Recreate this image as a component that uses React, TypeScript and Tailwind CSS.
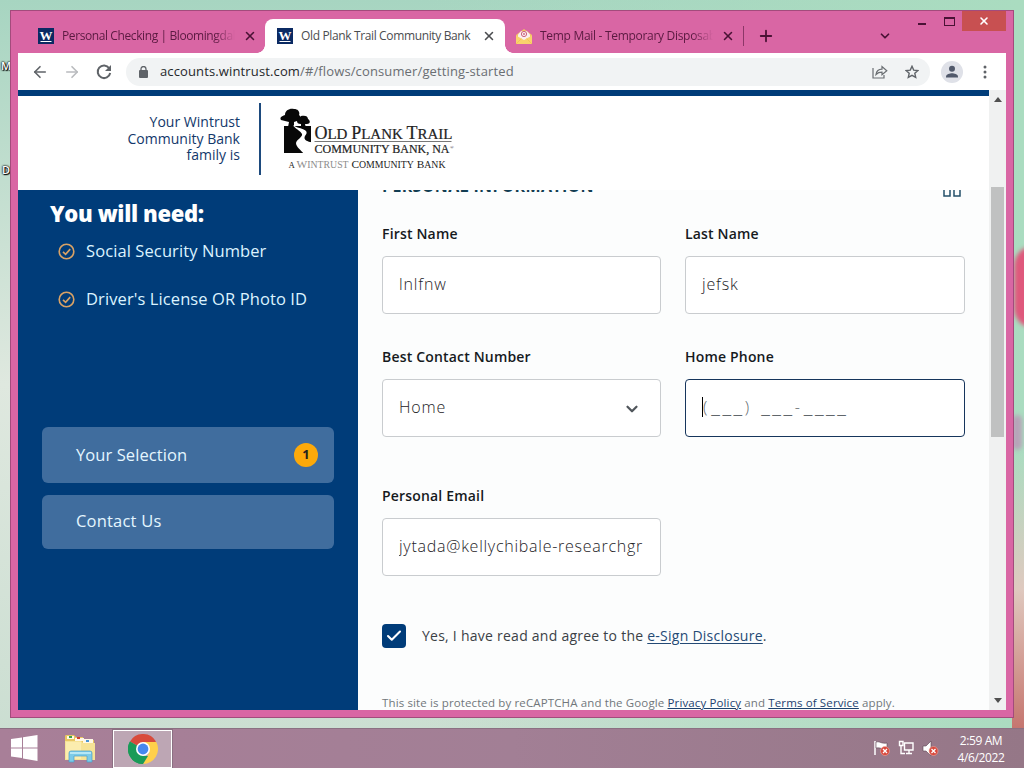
import { ArrowLeft, ArrowRight, ChevronDown, Check, Plus, X } from 'lucide-react';
import type { ReactNode } from 'react';

function WintrustFavicon() {
  return (
    <svg width="16" height="16" viewBox="0 0 16 16" className="shrink-0">
      <rect width="16" height="16" fill="#0b2a63" />
      <text x="8" y="11.5" textAnchor="middle" fontFamily="Liberation Serif, serif" fontWeight="700" fontSize="13" fill="#fff">W</text>
      <path d="M2.5 13.5h11" stroke="#fff" strokeWidth="1" />
    </svg>
  );
}

function MailFavicon() {
  return (
    <svg width="18" height="17" viewBox="0 0 18 17" className="shrink-0">
      <path d="M1 7 9 1l8 6v9H1z" fill="#f3c467" />
      <path d="M3 6.5 6 3.2h6L15 6.5v3L9 13 3 9.500z" fill="#fbeef0" />
      <circle cx="9" cy="6" r="2.600" fill="none" stroke="#c9607c" strokeWidth="1" />
      <circle cx="9" cy="6" r="0.900" fill="#c9607c" />
      <path d="M1 7.500 9 12l8-4.500V16H1z" fill="#f9d36c" />
      <path d="M1 16l5.500-5.500M17 16l-5.500-5.500" stroke="#f3bd52" strokeWidth="0.700" />
    </svg>
  );
}

function TabStrip() {
  return (
    <div className="flex h-[42px] shrink-0 items-end font-['Open_Sans','Noto_Sans',sans-serif] text-[12px] text-[#5b1a41]">
      <div className="flex h-[34px] w-[247px] items-center pl-5">
        <WintrustFavicon />
        <span className="ml-2 w-[173px] overflow-hidden whitespace-nowrap tracking-[-0.4px] [mask-image:linear-gradient(90deg,#000_88%,transparent)]">
          Personal Checking | Bloomingdale
        </span>
        <X className="ml-[8px] h-3.5 w-3.5 shrink-0 text-[#4a1235]" strokeWidth={2.600} />
      </div>
      <div className="relative flex h-[34px] w-[240px] items-center rounded-t-lg bg-white pl-3 text-[#4b4d50]">
        <div className="absolute bottom-0 -left-2 h-2 w-2 bg-[radial-gradient(circle_at_0_0,transparent_7.5px,white_8px)]" />
        <div className="absolute -right-2 bottom-0 h-2 w-2 bg-[radial-gradient(circle_at_100%_0,transparent_7.5px,white_8px)]" />
        <WintrustFavicon />
        <span className="ml-2 w-[172px] whitespace-nowrap tracking-[-0.36px]">Old Plank Trail Community Bank</span>
        <X className="ml-[9px] h-3.5 w-3.5 shrink-0" strokeWidth={2.600} />
      </div>
      <div className="flex h-[34px] w-[239px] items-center pl-[10px]">
        <MailFavicon />
        <span className="ml-[7px] w-[173px] overflow-hidden whitespace-nowrap tracking-[-0.3px] [mask-image:linear-gradient(90deg,#000_88%,transparent)]">
          Temp Mail - Temporary Disposable
        </span>
        <X className="ml-[8px] h-3.5 w-3.5 shrink-0 text-[#4a1235]" strokeWidth={2.600} />
        <span className="ml-[8px] h-5 w-px shrink-0 bg-[#8c3768]" />
      </div>
      <div className="flex h-[34px] flex-1 items-center">
        <Plus className="ml-[13px] h-[18px] w-[18px] text-[#4a1235]" strokeWidth={2.400} />
        <ChevronDown className="ml-[103px] h-3.5 w-3.5 text-[#4a1235]" strokeWidth={3} />
      </div>
      <div className="flex h-[42px] w-[100px] items-start text-[#4a1235]">
        <span className="mt-[12px] ml-[12px] h-[2px] w-[8px] bg-[#4a1235]" />
        <span className="mt-[6px] ml-[18px] h-[9px] w-[11px] border border-t-2 border-[#4a1235]" />
        <span className="ml-[7px] flex h-5 w-[44px] items-center justify-center bg-[#c85051] text-white">
          <X className="h-3 w-3" strokeWidth={3.200} />
        </span>
      </div>
    </div>
  );
}

function Toolbar() {
  return (
    <div className="flex h-[38px] shrink-0 items-center border-b border-[#e3ecee] bg-white pl-[13px] text-[#5f6368]">
      <ArrowLeft className="h-[18px] w-[18px]" strokeWidth={2.200} />
      <ArrowRight className="ml-[14px] h-[18px] w-[18px] text-[#b9bbbe]" strokeWidth={2.200} />
      <svg width="16" height="16" viewBox="0 0 16 16" fill="none" className="ml-[15px]">
        <path d="M13.200 4.200A6.300 6.300 0 1 0 14.200 9" stroke="#5f6368" strokeWidth="2" />
        <path d="M15 1v6H9z" fill="#5f6368" />
      </svg>
      <div className="ml-[14px] flex h-7 w-[804px] items-center rounded-full bg-[#f1f3f4] pl-[13px] font-['Open_Sans','Noto_Sans',sans-serif] text-[13px] tracking-[0.13px] text-[#6a6e72]">
        <svg width="9" height="12" viewBox="0 0 9 12">
          <rect y="4" width="9" height="8" rx="1" fill="#5f6368" />
          <path d="M2 5V3a2.500 2.500 0 0 1 5 0v2" fill="none" stroke="#5f6368" strokeWidth="1.300" />
        </svg>
        <span className="ml-[12px] flex-1 whitespace-nowrap">
          <span className="text-[#25282b]">accounts.wintrust.com</span>/#/flows/consumer/getting-started
        </span>
        <svg width="16" height="14" viewBox="0 0 16 14" fill="none" stroke="#6a6e72" strokeWidth="1.200" className="mr-[17px]">
          <path d="M1 3v10h11v-3" />
          <path d="M4 9.500C4.500 6 6.500 4.300 10 4.200V1.500l4.800 4.200L10 9.800V7.200C7.500 7.200 5.500 8 4 9.500z" />
        </svg>
        <svg width="14" height="14" viewBox="0 0 14 14" fill="none" stroke="#5f6368" strokeWidth="1.400" className="mr-[11px]">
          <path d="M7 1.300l1.700 3.800 4.200.4-3.100 2.800.9 4.100L7 10.300l-3.700 2.100.9-4.100L1.100 5.500l4.200-.4z" />
        </svg>
      </div>
      <svg width="22" height="22" viewBox="0 0 22 22" className="ml-[11px]">
        <circle cx="11" cy="11" r="11" fill="#dfe1e8" />
        <circle cx="11" cy="7.700" r="3" fill="#51596b" />
        <path d="M5 16.500v-1c0-2.300 4-3.300 6-3.300s6 1 6 3.300v1z" fill="#51596b" />
      </svg>
      <svg width="4" height="14" viewBox="0 0 4 14" fill="#5f6368" className="ml-[20px]">
        <circle cx="2" cy="2" r="1.500" />
        <circle cx="2" cy="7" r="1.500" />
        <circle cx="2" cy="12" r="1.500" />
      </svg>
    </div>
  );
}

function BankLogo() {
  return (
    <svg width="178" height="66" viewBox="0 0 178 66" fontFamily="Liberation Serif, serif">
      <path d="M4 18h27v27H4z" fill="#080808" />
      <path d="M1 12c-2-3 2-4 4-5 0-5 5-7 9-6 5 0 6 4 5 6 3 2 2 6-2 6l-3 1v5H8l1-5-4-1z" fill="#080808" />
      <path d="M17 13c0-3 3-3 4-5 4-1 7 0 7 3 3 2 2 5-1 5h-2l1 4h-5v-4c-3 0-4-1-4-3z" fill="#080808" />
      <path d="M13 17c1 3 8 6 9 9s-5 5-6 9c0 4 5 7 8 11h8V34.500c-4-1-7.500-2-7.500-4.500 0-3 3.500-4 1.500-7-3-3-10-3-13-6z" fill="#fff" />
      <path d="M18 18h13v16c-3-1-6.500-2.500-5.500-4.500s4-4 1-7c-3-2.500-7-2-8.500-4.500z" fill="#080808" />
      <g fill="#222">
        <text x="34.500" y="31" fontSize="18" textLength="138" lengthAdjust="spacingAndGlyphs" stroke="#222" strokeWidth="0.200">
          O<tspan fontSize="15">LD </tspan>P<tspan fontSize="15">LANK </tspan>T<tspan fontSize="15">RAIL</tspan>
        </text>
        <text x="34.500" y="45" fontSize="12.500" textLength="135" lengthAdjust="spacingAndGlyphs" stroke="#222" strokeWidth="0.200">COMMUNITY BANK, NA</text>
        <text x="170" y="41" fontSize="5">®</text>
        <text x="8.500" y="60" fontSize="11" textLength="157" lengthAdjust="spacingAndGlyphs">
          <tspan fontSize="8.500">A </tspan>
          <tspan fill="#8b8b8b">W<tspan fontSize="9.500">INTRUST</tspan></tspan> C<tspan fontSize="9.500">OMMUNITY</tspan> B<tspan fontSize="9.500">ANK</tspan>
        </text>
      </g>
      <path d="M34.500 33.500h137" stroke="#555" strokeWidth="0.800" />
    </svg>
  );
}

function PageHeader() {
  return (
    <div className="flex h-[100px] shrink-0 border-t-[6px] border-[#003c79] bg-white">
      <div className="mt-[18px] w-[222px] text-right text-[14px] leading-[16.7px] tracking-[0.02px] text-[#12386b]">
        Your Wintrust<br />Community Bank<br />family is
      </div>
      <div className="mt-[7px] ml-[19px] h-[72px] w-[2px] bg-[#1d4a7d]" />
      <div className="mt-[12px] ml-[19px]">
        <BankLogo />
      </div>
    </div>
  );
}

const NEEDS = ["Social Security Number", "Driver's License OR Photo ID"];

function Sidebar() {
  return (
    <aside className="flex w-[340px] shrink-0 flex-col bg-[#003c79] px-6 text-white">
      <h2 className="mt-[9px] ml-[8px] text-[22px] leading-7 font-extrabold tracking-[-0.35px]">You will need:</h2>
      <ul className="mt-[14px]">
        {NEEDS.map(item => (
          <li key={item} className="mb-[28px] flex h-5 items-center pl-[16px] text-[16.5px] tracking-[0.1px] whitespace-nowrap text-[#dcf3ff]">
            <svg width="17" height="17" viewBox="0 0 17 17" fill="none" stroke="#d9a265" strokeWidth="1.600">
              <circle cx="8.500" cy="8.500" r="7.300" />
              <path d="M5 8.800l2.600 2.500 4.600-5.200" />
            </svg>
            <span className="ml-[11px]">{item}</span>
          </li>
        ))}
      </ul>
      <div className="mt-[90px] flex h-14 items-center justify-between rounded-md bg-[#406d9e] pr-4 pl-[34px] text-[16.5px] tracking-[0.08px] text-[#e4f6ff]">
        Your Selection
        <span className="flex h-6 w-6 items-center justify-center rounded-full bg-[#fca90a] text-[13px] font-bold text-[#22221f]">1</span>
      </div>
      <div className="mt-3 flex h-[54px] items-center rounded-md bg-[#406d9e] pb-[2px] pl-[34px] text-[16.5px] tracking-[0.2px] text-[#e4f6ff]">
        Contact Us
      </div>
    </aside>
  );
}

function Field({ label, focused, children }: { label: string; focused?: boolean; children: ReactNode }) {
  return (
    <div>
      <div className="h-5 text-[14px] leading-5 font-semibold tracking-[0.18px] text-[#161a1d]">{label}</div>
      <div
        className={`mt-[12px] flex h-[58px] items-center overflow-hidden rounded border bg-white px-4 pb-[2px] text-[16px] tracking-[0.85px] whitespace-nowrap text-[#1d2226] ${
          focused ? 'border-[#16355c]' : 'border-[#c9cccf]'
        }`}
      >
        {children}
      </div>
    </div>
  );
}

// unfilled digits of the phone mask
function Blanks({ count }: { count: number }) {
  return <span className="text-[21px] leading-4 tracking-[2.5px]">{'_'.repeat(count)}</span>;
}

function ApplicationForm() {
  return (
    <main className="flex-1 overflow-hidden bg-[#fcfdfd] pl-6">
      <div className="mt-[-14px] flex h-5 w-[583px] justify-between">
        <h3 className="text-[16px] leading-5 font-bold tracking-[0.34px] whitespace-nowrap text-[#123d52]">PERSONAL INFORMATION</h3>
        <svg width="18" height="18" viewBox="0 0 18 18" fill="none" stroke="#24506a" strokeWidth="1.500" className="mt-[3px] mr-[4px]">
          <path d="M1 1h6v6H1zM11 1h6v6h-6zM1 9h6v8H1zM11 9h6v8h-6z" />
        </svg>
      </div>
      <div className="mt-[28px] grid w-[583px] grid-cols-[279px_280px] gap-x-6 gap-y-[33px]">
        <Field label="First Name"><span className="font-light">lnlfnw</span></Field>
        <Field label="Last Name"><span className="font-light">jefsk</span></Field>
        <Field label="Best Contact Number">
          <span className="flex-1 font-light">Home</span>
          <ChevronDown className="mt-[3px] mr-[3px] h-[18px] w-[18px] text-[#51575c]" strokeWidth={3} />
        </Field>
        <Field label="Home Phone" focused>
          <span className="h-5 w-px bg-black" />
          <span className="font-light tracking-[4px] text-[#60666b]">
            (<Blanks count={3} />){' '}<Blanks count={3} />-<Blanks count={4} />
          </span>
        </Field>
      </div>
      <div className="mt-[49px] w-[279px]">
        <Field label="Personal Email">
          <span className="w-[245px] shrink-0 overflow-hidden font-light tracking-[0.5px]">
            <span className="inline-block w-[245px] overflow-hidden align-top tracking-[0.74px]">jytada@kellychibale-researchgr</span>
          </span>
        </Field>
      </div>
      <div className="mt-[48px] flex h-6 items-center text-[14px] tracking-[0.25px] whitespace-nowrap text-[#3b4146]">
        <span className="mr-4 flex h-6 w-6 items-center justify-center rounded bg-[#003c79] text-white">
          <Check className="h-[18px] w-[18px]" strokeWidth={2.800} />
        </span>
        <span className="pb-px">Yes, I have read and agree to the <a className="text-[#244a75] underline underline-offset-2">e-Sign Disclosure</a>.</span>
      </div>
      <p className="mt-[47px] text-[11.5px] leading-4 tracking-[0.13px] whitespace-nowrap text-[#71777b]">
        This site is protected by reCAPTCHA and the Google <a className="text-[#1e426e] underline">Privacy Policy</a> and{' '}
        <a className="text-[#1e426e] underline">Terms of Service</a> apply.
      </p>
    </main>
  );
}

function ScrollBar() {
  return (
    <div className="flex w-[17px] shrink-0 flex-col items-center bg-[#f0f1f1]">
      <svg width="8" height="5" viewBox="0 0 8 5" className="mt-[7px]"><path d="M0 5h8L4 0z" fill="#505050" /></svg>
      <div className="mt-[85px] h-[250px] w-[13px] bg-[#c0c1c1]" />
      <svg width="8" height="5" viewBox="0 0 8 5" className="mt-auto mb-[7px]"><path d="M0 0h8L4 5z" fill="#505050" /></svg>
    </div>
  );
}

function ChromeIcon() {
  return (
    <svg width="30" height="30" viewBox="0 0 30 30">
      <path d="M15 15 2 7.500A15 15 0 0 1 28 7.500z" fill="#d84b3c" />
      <path d="M15 15 2 7.500A15 15 0 0 0 15 30z" fill="#1a9b58" />
      <path d="M15 8h13.300A15 15 0 0 1 15 30l6.200-11.500z" fill="#ffd04b" />
      <path d="M2 7.500 8.800 18.500 15 22l5 0L15 30A15 15 0 0 1 2 7.500z" fill="#1a9b58" />
      <circle cx="15" cy="15" r="7" fill="#fff" />
      <circle cx="15" cy="15" r="5.400" fill="#4688ee" />
    </svg>
  );
}

function ExplorerIcon() {
  return (
    <svg width="32" height="30" viewBox="0 0 32 30">
      <path d="M1 3c0-1 0-2 1-2h8l2 2h7v3h11v20H1z" fill="#e9c660" />
      <path d="M3 2h7v3H3zM11 4h9v3h-9zM19 5h10v4H19z" fill="#fff8e6" />
      <path d="M5 2h3v2H5z" fill="#37a24d" />
      <path d="M13 3h3v2h-3z" fill="#cf4332" />
      <path d="M22 6h3v2h-3z" fill="#4a94d4" />
      <path d="M1 7h16l2 2h12v17H1z" fill="#f6e396" />
      <path d="M2 8h15v17H2z" fill="#fbedaf" />
      <path d="M5 28V19q0-2 2-2h19q2 0 2 2v9h-5v-6H10v6z" fill="#7ccbe8" stroke="#4c9fc8" strokeWidth="0.700" />
      <path d="M6 19h21" stroke="#c9f0fb" strokeWidth="1.500" />
    </svg>
  );
}

function ErrorBadge({ x, y }: { x: number; y: number }) {
  return (
    <g>
      <circle cx={x} cy={y} r="4.500" fill="#d8493d" stroke="#f0aaa0" strokeWidth="0.600" />
      <path d={`M${x - 2} ${y - 2}l4 4M${x + 2} ${y - 2}l-4 4`} stroke="#fff" strokeWidth="1.300" />
    </g>
  );
}

function Taskbar() {
  return (
    <div className="mt-auto flex h-10 shrink-0 items-center border-t border-[#8b7082] bg-linear-to-r from-[#a87f98] via-[#a27f95] to-[#957787]">
      <svg width="27" height="26" viewBox="0 0 27 26" fill="#fff" className="mb-[2px] ml-[11px] shrink-0">
        <path d="M0 4l11-1.500V12.500H0zM12 2.300 26.500 0v12.500H12zM0 13.500h11V23L0 21.500zM12 13.500h14.500V26L12 23.500z" />
      </svg>
      <div className="ml-[26px]"><ExplorerIcon /></div>
      <div className="ml-[17px] flex h-[38px] w-[59px] items-center justify-center border border-white bg-[#bda6b4] outline outline-1 outline-[#8b7082]">
        <ChromeIcon />
      </div>
      <div className="mr-[19px] ml-auto flex items-center text-white">
        <svg width="16" height="17" viewBox="0 0 16 17">
          <path d="M1 1v14" stroke="#fff" strokeWidth="1.500" />
          <path d="M2 2c4-1 5 2 11 1v6c-5 1-6-2-11-1z" fill="#fff" stroke="#5b4353" strokeWidth="0.600" />
          <ErrorBadge x={11} y={11} />
        </svg>
        <svg width="17" height="17" viewBox="0 0 17 17" fill="none" stroke="#fff" strokeWidth="1.400" className="ml-[8px]">
          <path d="M6.500 3H15v7H6.500zM8 13.500h6M11 10v3.500M3 6v7.500h4" />
          <path d="M1.500 1.500h3.500v4H1.500z" />
        </svg>
        <svg width="17" height="17" viewBox="0 0 17 17" className="ml-[7px]">
          <path d="M1 6h3l5-5v15l-5-5H1z" fill="#fff" stroke="#5b4353" strokeWidth="0.600" />
          <ErrorBadge x={11.500} y={11} />
        </svg>
        <div className="ml-[18px] w-[48px] text-center font-['Open_Sans','Noto_Sans',sans-serif] text-[12px] leading-[17px] tracking-[-0.4px] whitespace-nowrap">
          <div>2:59 AM</div>
          <div className="mx-[-2px]">4/6/2022</div>
        </div>
      </div>
    </div>
  );
}

export default function App() {
  return (
    <div className="relative flex h-[768px] w-[1024px] flex-col overflow-hidden bg-linear-to-b from-[#a7d5c1] via-[#dfe8df] to-[#c9ddd0] font-['Open_Sans','Noto_Sans',sans-serif]">
      {/* wallpaper behind the window's right edge */}
      <div className="absolute top-0 right-0 h-[728px] w-[600px] bg-linear-to-r from-transparent to-[#aadcc0]" />
      <div className="absolute top-[246px] right-[-30px] h-[82px] w-[40px] rounded-full bg-[#df587c] blur-[2px]" />
      <div className="absolute top-[415px] right-[2px] h-[35px] w-[10px] rounded-full bg-[#b7a3b8] blur-[2px]" />
      <div className="absolute top-[450px] right-0 h-[278px] w-[12px] bg-linear-to-b from-transparent via-[#dfc9bf] to-[#c57670]" />
      <span className="absolute top-[60px] left-[1px] text-[11px] leading-3 font-semibold text-white [text-shadow:0_0_2px_#000,0_0_2px_#000,1px_1px_1px_#000]">M</span>
      <span className="absolute top-[164px] left-[2px] text-[11px] leading-3 font-semibold text-white [text-shadow:0_0_2px_#000,0_0_2px_#000,1px_1px_1px_#000]">D</span>

      <div className="relative mt-[10px] ml-[10px] flex h-[708px] w-[1004px] flex-col border border-[#a34b7c] bg-[#d966a4] px-[7px] pb-[7px]">
        <TabStrip />
        <Toolbar />
        <div className="mt-[-1px] flex min-h-0 flex-1 bg-white">
          <div className="flex flex-1 flex-col overflow-hidden">
            <PageHeader />
            <div className="flex min-h-0 flex-1">
              <Sidebar />
              <ApplicationForm />
            </div>
          </div>
          <ScrollBar />
        </div>
      </div>

      <Taskbar />
    </div>
  );
}
